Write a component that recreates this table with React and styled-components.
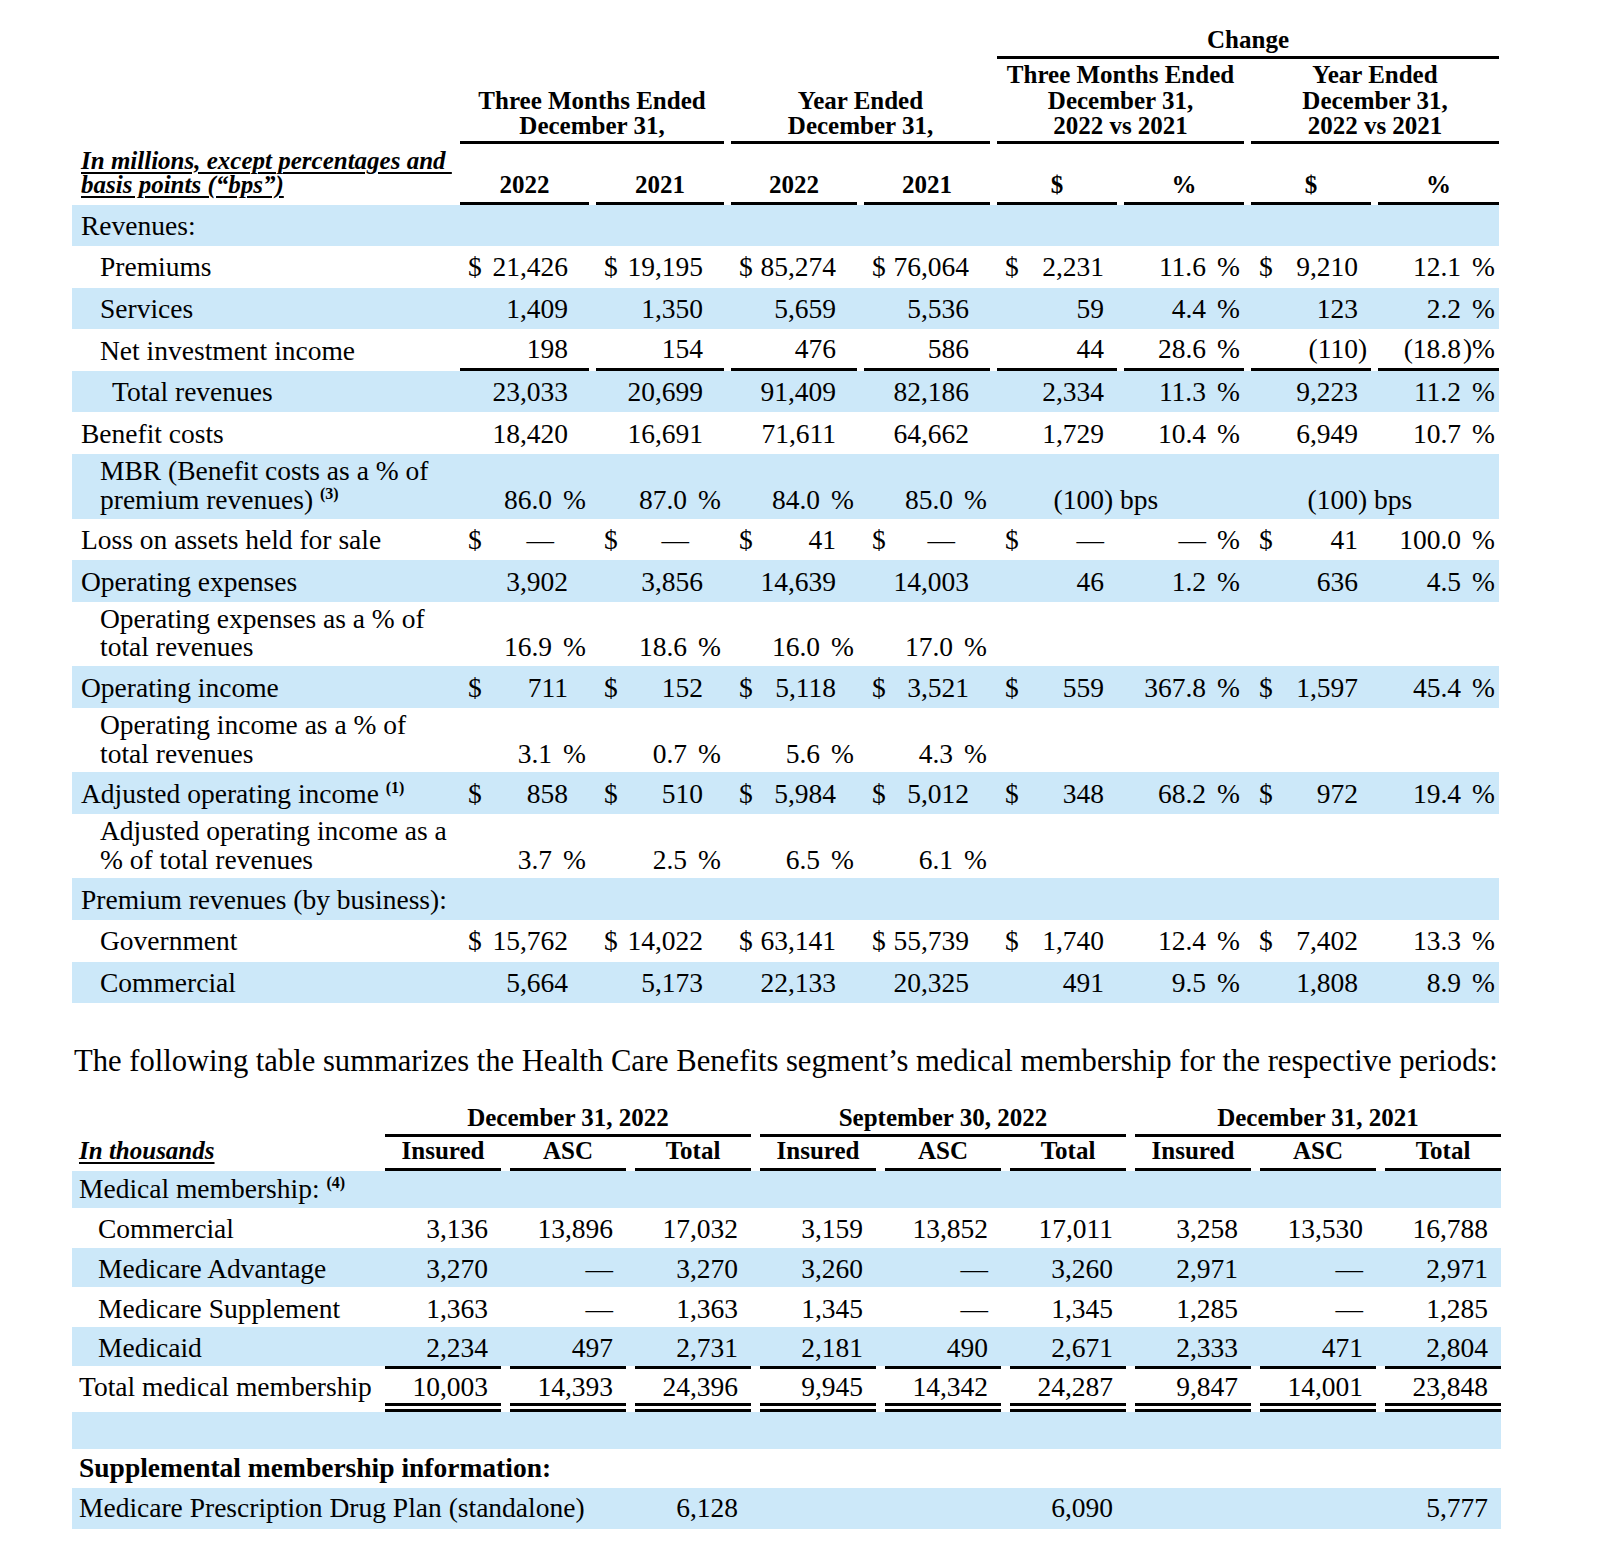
import React from 'react';
import styled, { createGlobalStyle } from 'styled-components';

const SHADE = '#cce8f9';
const COLS1 = '381px 129px 128px 126px 126px 120px 120px 120px 121px';
const COLS2 = '304px repeat(9, 116px)';

const GlobalStyle = createGlobalStyle`
  html, body { margin: 0; padding: 0; background: #fff; }
  body {
    font-family: "Liberation Serif", "Times New Roman", serif;
    color: #000;
  }
`;

const Page = styled.div`
  padding: 27px 0 40px 72px;
  width: 1430px;
`;

const Table = styled.section`
  width: ${p => p.$w}px;
`;

const HeadRow = styled.div`
  display: grid;
  grid-template-columns: ${p => p.$cols};
  column-gap: ${p => p.$gap}px;
  align-items: end;
  padding-top: ${p => p.$pt || 0}px;
`;

const HeadCell = styled.div`
  grid-column: ${p => p.$col};
  font-weight: 700;
  font-size: 25px;
  line-height: ${p => p.$lh}px;
  text-align: center;
  padding-bottom: ${p => p.$pb}px;
  border-bottom: 3px solid #000;
  white-space: nowrap;
`;

const UnitCaption = styled.div`
  grid-column: 1;
  font-weight: 700;
  font-style: italic;
  font-size: 25px;
  line-height: ${p => p.$lh}px;
  padding-left: ${p => p.$pl}px;
  padding-bottom: ${p => p.$pb}px;
  border-bottom: 3px solid transparent;
  white-space: nowrap;
`;

const Underlined = styled.span`
  text-decoration: underline;
  text-decoration-thickness: 2px;
  text-underline-offset: 3px;
`;

const FinRow = styled.div`
  display: grid;
  grid-template-columns: ${COLS1};
  column-gap: 7px;
  box-sizing: border-box;
  height: ${p => (p.$tall ? 64.5 : 41.6)}px;
  padding-top: ${p => (p.$tall ? 0 : 2)}px;
  background: ${p => (p.$shade ? SHADE : '#fff')};
  font-size: 27.5px;
  line-height: 28.8px;
`;

const RowLabel = styled.div`
  grid-column: ${p => p.$span || 'auto'};
  display: flex;
  align-items: ${p => (p.$tall ? 'flex-end' : 'center')};
  padding-left: ${p => p.$pl}px;
  padding-bottom: ${p => (p.$tall ? 4 : 0)}px;
  font-weight: ${p => (p.$bold ? 700 : 400)};
  white-space: nowrap;
`;

const Amount = styled.div`
  display: flex;
  align-items: ${p => (p.$tall ? 'flex-end' : 'center')};
  padding: 0 ${p => p.$pr}px ${p => (p.$tall ? 4 : 0)}px 8px;
  border-bottom: ${p => (p.$rule ? '3px solid #000' : '0')};
  white-space: nowrap;
`;

const Dollar = styled.span`
  flex: none;
`;

const Figure = styled.span`
  flex: 1;
  text-align: right;
  padding-right: ${p => (p.$inset ? 14 : 0)}px;
`;

const Tail = styled.span`
  flex: none;
  width: ${p => p.$w}px;
  min-width: 0;
  text-align: ${p => (p.$right ? 'right' : 'left')};
  white-space: nowrap;
`;

const Note = styled.sup`
  font-size: 16px;
  font-weight: 700;
  line-height: 0;
  vertical-align: 10px;
`;

const Lead = styled.p`
  margin: 42.5px 0 29px 2px;
  font-size: 30.6px;
  line-height: 30px;
  white-space: nowrap;
`;

const MemberRow = styled.div`
  display: grid;
  grid-template-columns: ${COLS2};
  column-gap: 9px;
  box-sizing: border-box;
  height: ${p => p.$h}px;
  padding-top: ${p => p.$pt || 0}px;
  background: ${p => (p.$shade ? SHADE : '#fff')};
  font-size: 27.5px;
  line-height: 28.8px;
`;

const Count = styled.div`
  grid-column: ${p => p.$col || 'auto'};
  display: flex;
  align-items: center;
  justify-content: flex-end;
  padding-right: 13px;
  padding-top: ${p => (p.$total ? 2 : 0)}px;
  border-top: ${p => (p.$total ? '3px solid #000' : '0')};
  border-bottom: ${p => (p.$total ? '9px double #000' : '0')};
  white-space: nowrap;
`;

const TotalLabel = styled(RowLabel)`
  padding-top: 2px;
  border-top: 3px solid transparent;
  border-bottom: 9px solid transparent;
`;

function parse(s) {
  if (!s) return null;
  let dollar = false;
  let v = s;
  let tail = '';
  let kind = 'num';
  let inset = false;
  if (v.startsWith('$|')) {
    dollar = true;
    v = v.slice(2);
  }
  if (v === '—*') {
    v = '—';
    inset = true;
  } else if (v.endsWith(') bps')) {
    tail = ') bps';
    v = v.slice(0, -5);
  } else if (v.endsWith(')%')) {
    tail = ')%';
    v = v.slice(0, -2);
    kind = 'pct';
  } else if (v.endsWith('%')) {
    tail = '%';
    v = v.slice(0, -1);
    kind = 'pct';
  } else if (v.endsWith(')')) {
    tail = ')';
    v = v.slice(0, -1);
  }
  return { dollar, v, tail, kind, inset };
}

function FinCell({ spec, idx, tall, rule }) {
  const wide = idx < 4;
  const p = parse(spec);
  const pct = p && p.kind === 'pct';
  const tw = pct ? 34 : wide ? 18 : 9;
  return (
    <Amount $tall={tall} $rule={rule} $pr={wide ? 3 : 4}>
      {p && p.dollar && <Dollar>$</Dollar>}
      <Figure $inset={p && p.inset}>{p ? p.v : ''}</Figure>
      <Tail $w={tw} $right={pct}>{p ? p.tail : ''}</Tail>
    </Amount>
  );
}

const LEVEL = [9, 28, 40];

const finRows = [
  { label: 'Revenues:', level: 0, shade: true, cells: [] },
  { label: 'Premiums', level: 1, cells: ['$|21,426', '$|19,195', '$|85,274', '$|76,064', '$|2,231', '11.6%', '$|9,210', '12.1%'] },
  { label: 'Services', level: 1, shade: true, cells: ['1,409', '1,350', '5,659', '5,536', '59', '4.4%', '123', '2.2%'] },
  { label: 'Net investment income', level: 1, rule: true, cells: ['198', '154', '476', '586', '44', '28.6%', '(110)', '(18.8)%'] },
  { label: 'Total revenues', level: 2, shade: true, cells: ['23,033', '20,699', '91,409', '82,186', '2,334', '11.3%', '9,223', '11.2%'] },
  { label: 'Benefit costs', level: 0, cells: ['18,420', '16,691', '71,611', '64,662', '1,729', '10.4%', '6,949', '10.7%'] },
  {
    label: (
      <>
        MBR (Benefit costs as a % of
        <br />
        premium revenues) <Note>(3)</Note>
      </>
    ),
    level: 1,
    shade: true,
    tall: true,
    cells: ['86.0%', '87.0%', '84.0%', '85.0%', '(100) bps', '', '(100) bps', ''],
  },
  { label: 'Loss on assets held for sale', level: 0, cells: ['$|—*', '$|—*', '$|41', '$|—*', '$|—', '—%', '$|41', '100.0%'] },
  { label: 'Operating expenses', level: 0, shade: true, cells: ['3,902', '3,856', '14,639', '14,003', '46', '1.2%', '636', '4.5%'] },
  {
    label: (
      <>
        Operating expenses as a % of
        <br />
        total revenues
      </>
    ),
    level: 1,
    tall: true,
    cells: ['16.9%', '18.6%', '16.0%', '17.0%'],
  },
  { label: 'Operating income', level: 0, shade: true, cells: ['$|711', '$|152', '$|5,118', '$|3,521', '$|559', '367.8%', '$|1,597', '45.4%'] },
  {
    label: (
      <>
        Operating income as a % of
        <br />
        total revenues
      </>
    ),
    level: 1,
    tall: true,
    cells: ['3.1%', '0.7%', '5.6%', '4.3%'],
  },
  {
    label: (
      <>
        Adjusted operating income <Note>(1)</Note>
      </>
    ),
    level: 0,
    shade: true,
    cells: ['$|858', '$|510', '$|5,984', '$|5,012', '$|348', '68.2%', '$|972', '19.4%'],
  },
  {
    label: (
      <>
        Adjusted operating income as a
        <br />% of total revenues
      </>
    ),
    level: 1,
    tall: true,
    cells: ['3.7%', '2.5%', '6.5%', '6.1%'],
  },
  { label: 'Premium revenues (by business):', level: 0, shade: true, cells: [] },
  { label: 'Government', level: 1, cells: ['$|15,762', '$|14,022', '$|63,141', '$|55,739', '$|1,740', '12.4%', '$|7,402', '13.3%'] },
  { label: 'Commercial', level: 1, shade: true, cells: ['5,664', '5,173', '22,133', '20,325', '491', '9.5%', '1,808', '8.9%'] },
];

const memberRows = [
  { label: 'Commercial', shade: false, h: 40, cells: ['3,136', '13,896', '17,032', '3,159', '13,852', '17,011', '3,258', '13,530', '16,788'] },
  { label: 'Medicare Advantage', shade: true, h: 39.5, cells: ['3,270', '—', '3,270', '3,260', '—', '3,260', '2,971', '—', '2,971'] },
  { label: 'Medicare Supplement', shade: false, h: 40, cells: ['1,363', '—', '1,363', '1,345', '—', '1,345', '1,285', '—', '1,285'] },
  { label: 'Medicaid', shade: true, h: 38.5, cells: ['2,234', '497', '2,731', '2,181', '490', '2,671', '2,333', '471', '2,804'] },
];

const totals = ['10,003', '14,393', '24,396', '9,945', '14,342', '24,287', '9,847', '14,001', '23,848'];

function FinancialTable() {
  return (
    <Table $w={1427}>
      <HeadRow $cols={COLS1} $gap={7}>
        <HeadCell $col="6 / 10" $lh={26} $pb={3}>Change</HeadCell>
      </HeadRow>
      <HeadRow $cols={COLS1} $gap={7} $pt={3}>
        <HeadCell $col="2 / 4" $lh={25.5} $pb={2}>
          Three Months Ended
          <br />
          December 31,
        </HeadCell>
        <HeadCell $col="4 / 6" $lh={25.5} $pb={2}>
          Year Ended
          <br />
          December 31,
        </HeadCell>
        <HeadCell $col="6 / 8" $lh={25.5} $pb={2}>
          Three Months Ended
          <br />
          December 31,
          <br />
          2022 vs 2021
        </HeadCell>
        <HeadCell $col="8 / 10" $lh={25.5} $pb={2}>
          Year Ended
          <br />
          December 31,
          <br />
          2022 vs 2021
        </HeadCell>
      </HeadRow>
      <HeadRow $cols={COLS1} $gap={7} $pt={5}>
        <UnitCaption $lh={24.5} $pl={9} $pb={4}>
          <Underlined>In millions, except percentages and&nbsp;</Underlined>
          <br />
          <Underlined>basis points (“bps”)</Underlined>
        </UnitCaption>
        {['2022', '2021', '2022', '2021', '$', '%', '$', '%'].map((h, i) => (
          <HeadCell key={i} $col={`${i + 2}`} $lh={24.5} $pb={4}>
            {h}
          </HeadCell>
        ))}
      </HeadRow>
      {finRows.map((r, ri) => (
        <FinRow key={ri} $shade={r.shade} $tall={r.tall}>
          <RowLabel $pl={LEVEL[r.level]} $tall={r.tall}>
            <span>{r.label}</span>
          </RowLabel>
          {Array.from({ length: 8 }).map((_, i) => (
            <FinCell key={i} idx={i} spec={r.cells[i]} tall={r.tall} rule={r.rule} />
          ))}
        </FinRow>
      ))}
    </Table>
  );
}

function MembershipTable() {
  const groups = ['December 31, 2022', 'September 30, 2022', 'December 31, 2021'];
  return (
    <Table $w={1429}>
      <HeadRow $cols={COLS2} $gap={9}>
        {groups.map((g, i) => (
          <HeadCell key={g} $col={`${2 + i * 3} / ${5 + i * 3}`} $lh={25.5} $pb={3.75}>
            {g}
          </HeadCell>
        ))}
      </HeadRow>
      <HeadRow $cols={COLS2} $gap={9} $pt={1.5}>
        <UnitCaption $lh={25.5} $pl={7} $pb={4}>
          <Underlined>In thousands</Underlined>
        </UnitCaption>
        {Array.from({ length: 9 }).map((_, i) => (
          <HeadCell key={i} $col={`${i + 2}`} $lh={25.5} $pb={4}>
            {['Insured', 'ASC', 'Total'][i % 3]}
          </HeadCell>
        ))}
      </HeadRow>
      <MemberRow $shade $h={37}>
        <RowLabel $pl={7} $span="1 / -1">
          <span>
            Medical membership: <Note>(4)</Note>
          </span>
        </RowLabel>
      </MemberRow>
      {memberRows.map(r => (
        <MemberRow key={r.label} $shade={r.shade} $h={r.h} $pt={3}>
          <RowLabel $pl={26}>
            <span>{r.label}</span>
          </RowLabel>
          {r.cells.map((c, i) => (
            <Count key={i}>{c}</Count>
          ))}
        </MemberRow>
      ))}
      <MemberRow $h={46}>
        <TotalLabel $pl={7}>
          <span>Total medical membership</span>
        </TotalLabel>
        {totals.map((c, i) => (
          <Count key={i} $total>
            {c}
          </Count>
        ))}
      </MemberRow>
      <MemberRow $shade $h={37} />
      <MemberRow $h={39}>
        <RowLabel $pl={7} $span="1 / -1" $bold>
          <span>Supplemental membership information:</span>
        </RowLabel>
      </MemberRow>
      <MemberRow $shade $h={41}>
        <RowLabel $pl={7} $span="1 / 4">
          <span>Medicare Prescription Drug Plan (standalone)</span>
        </RowLabel>
        <Count $col="4">6,128</Count>
        <Count $col="7">6,090</Count>
        <Count $col="10">5,777</Count>
      </MemberRow>
    </Table>
  );
}

export default function App() {
  return (
    <>
      <GlobalStyle />
      <Page>
        <FinancialTable />
        <Lead>
          The following table summarizes the Health Care Benefits segment’s medical membership for the respective periods:
        </Lead>
        <MembershipTable />
      </Page>
    </>
  );
}
